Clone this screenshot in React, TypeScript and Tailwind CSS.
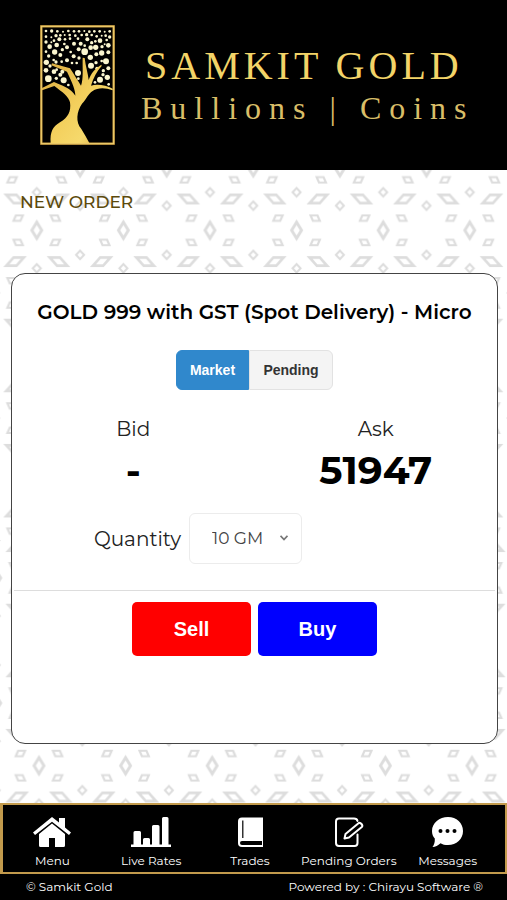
import React, { useState } from "react";

const TILE_W = 86.6;
const TILE_H = 125.2;

const FOLIAGE: [number, number, number][] = [
  [50, 48, 4], [67, 48, 5], [84, 49, 4], [101, 50, 3], [117, 48, 4], [134, 49, 4], [149, 49, 4], [165, 48, 3], [180, 50, 4], [195, 49, 4], [211, 49, 4], [226, 50, 3], [241, 49, 4],
  [50, 65, 4], [66, 67, 3], [80, 62, 5], [93, 61, 4], [106, 60, 3], [121, 60, 4], [138, 62, 4], [157, 60, 4], [172, 59, 5], [187, 60, 4], [202, 64, 4], [217, 62, 3], [229, 62, 4], [241, 66, 5],
  [50, 81, 5], [66, 82, 3], [74, 77, 4], [90, 73, 6], [107, 73, 4], [122, 71, 4], [134, 86, 6], [146, 71, 4], [154, 86, 6], [174, 73, 6], [166, 92, 4], [187, 83, 5], [198, 79, 4], [212, 77, 7], [226, 88, 3], [237, 91, 7], [232, 75, 4],
  [61, 95, 7], [82, 90, 7], [105, 87, 4], [113, 97, 6], [99, 104, 5], [76, 111, 8], [50, 110, 4], [58, 123, 5], [93, 120, 6], [124, 111, 4], [133, 124, 6], [148, 103, 6], [166, 110, 10], [184, 98, 7], [199, 97, 8], [218, 95, 5], [217, 114, 8], [201, 118, 6], [183, 127, 8], [237, 112, 6],
  [51, 142, 8], [73, 135, 4], [80, 141, 5], [97, 140, 4], [113, 136, 6], [128, 144, 4], [149, 129, 5], [142, 144, 4], [50, 166, 7], [62, 153, 5], [82, 164, 4], [99, 170, 6], [74, 170, 7], [57, 191, 10], [81, 190, 5], [93, 179, 6], [103, 196, 9], [117, 210, 4], [146, 174, 9], [147, 191, 4],
  [185, 152, 9], [200, 143, 5], [217, 138, 4], [230, 139, 9], [203, 160, 5], [237, 160, 6], [222, 167, 5], [234, 187, 8], [212, 194, 9], [221, 179, 5], [197, 202, 4], [238, 208, 4],
];

function TreeLogo() {
  return (
    <svg viewBox="32 30 225 360" className="h-[120px] w-[75px] shrink-0" role="img" aria-label="Samkit Gold tree">
      <defs>
        <linearGradient id="gold" x1="0" y1="0" x2="1" y2="1">
          <stop offset="0" stopColor="#d9a83c" />
          <stop offset="0.5" stopColor="#f3cf5c" />
          <stop offset="0.75" stopColor="#f6d96c" />
          <stop offset="1" stopColor="#d6a238" />
        </linearGradient>
      </defs>
      <rect x="36" y="34" width="217" height="352" fill="none" stroke="#c89c40" strokeWidth="7" />
      <rect x="36" y="34" width="217" height="352" fill="none" stroke="#f0d070" strokeWidth="3" />
      {FOLIAGE.map(([x, y, r], i) => (
        <circle key={i} cx={x} cy={y} r={r} fill="#fbf6cf" />
      ))}
      <path
        fill="url(#gold)"
        d="M64 384 C62 350 70 336 92 322 C116 308 126 290 122 262 C118 244 100 232 75 213 L38 226 L38 219 L74 201 L86 206 C105 214 127 222 138 242 C138 225 130 205 113 170 L66 151 L68 145 L122 160 C135 180 146 198 155 212 C163 190 159 160 160 128 L166 129 C169 155 176 175 178 195 C184 175 198 160 216 149 L217 153 C203 168 192 188 185 212 C202 206 230 210 250 221 L250 226 C228 217 205 217 190 228 C175 238 172 252 158 266 C142 290 138 320 156 342 L168 362 L180 384 Z"
      />
    </svg>
  );
}

/* Outline of a polygon around (x, y), followed by its scaled-down hole. */
function ring(x: number, y: number, corners: number[][], hole: number) {
  const loop = (k: number) => "M" + corners.map(([a, b]) => `${x + a * k} ${y + b * k}`).join("L") + "Z";
  return loop(1) + loop(hole);
}

function Gem({ x, y, w, h }: { x: number; y: number; w: number; h: number }) {
  return <path d={ring(x, y, [[0, -h], [w, 0], [0, h], [-w, 0]], 0.48)} />;
}

/* A leaning rhombus; lean 1 falls to the right, lean -1 rises to the right. */
function Leaf({ x, y, w, h, inset, lean }: { x: number; y: number; w: number; h: number; inset: number; lean: number }) {
  return (
    <path d={ring(x, y, [[-w * lean, -h], [inset * lean, -h], [w * lean, h], [-inset * lean, h]], 0.48)} />
  );
}

const SIGNS = [-1, 1];

function Motif({ x, y }: { x: number; y: number }) {
  return (
    <g>
      <Gem x={x} y={y} w={6.7} h={11} />
      <Gem x={x} y={y - 38} w={5.4} h={5.8} />
      <Gem x={x} y={y + 38} w={5.4} h={5.8} />
      {SIGNS.map((a) =>
        SIGNS.map((b) => (
          <Leaf key={`${a}${b}`} x={x + 18.6 * a} y={y + 12.2 * b} w={6.3} h={3.8} inset={3} lean={-a * b} />
        ))
      )}
    </g>
  );
}

function PatternTile({ id, x, y }: { id: string; x: number; y: number }) {
  const cx = TILE_W / 2;
  const cy = TILE_H / 2;
  return (
    <pattern id={id} x={x - cx} y={y - cy} width={TILE_W} height={TILE_H} patternUnits="userSpaceOnUse">
      <g fill="#dddddd" fillRule="evenodd">
        <Motif x={cx} y={cy} />
        <Motif x={0} y={0} />
        <Motif x={TILE_W} y={0} />
        <Motif x={0} y={TILE_H} />
        <Motif x={TILE_W} y={TILE_H} />
        {SIGNS.map((a) =>
          SIGNS.map((b) => (
            <Leaf key={`${a}${b}`} x={cx + 21.7 * a} y={cy + 31.3 * b} w={11.8} h={5.5} inset={2} lean={a * b} />
          ))
        )}
      </g>
    </pattern>
  );
}

function Backdrop() {
  return (
    <svg className="absolute inset-0 h-full w-full" aria-hidden="true">
      <defs>
        <PatternTile id="upper" x={36.8} y={60.3} />
        <PatternTile id="lower" x={39} y={595.7} />
      </defs>
      <rect width="100%" height="370" fill="url(#upper)" />
      <rect y="370" width="100%" height="100%" fill="url(#lower)" />
    </svg>
  );
}

const HomeIcon = () => (
  <svg viewBox="0 0 38 30" className="h-[30px] w-[38px]" fill="#fff" aria-hidden="true">
    <path d="M19 0L26 5.500V1H32V10.500L38 15.500L36 18L19 4.800L2 18L0 15.500Z" />
    <path d="M19 6.500L32 17V28.500Q32 30 30.500 30H22V21H16V30H7.500Q6 30 6 28.500V17Z" />
  </svg>
);

const BarsIcon = () => (
  <svg viewBox="0 0 40 30" className="h-[30px] w-10" fill="#fff" aria-hidden="true">
    <path d="M0 27.500H2.500V15.500Q2.500 14 4 14H8.500Q10 14 10 15.500V27.500H12V22.500Q12 21 13.500 21H17.500Q19 21 19 22.500V27.500H21V9.500Q21 8 22.500 8H27Q28.500 8 28.500 9.500V27.500H31V1.500Q31 0 32.500 0H36Q37.500 0 37.500 1.500V27.500H40V30H0Z" />
  </svg>
);

const BookIcon = () => (
  <svg viewBox="0 0 26 30" className="h-[30px] w-[26px]" aria-hidden="true">
    <path fill="#fff" d="M5 0.500H26V30H5Q1 30 1 26V4.500Q1 0.500 5 0.500Z" />
    <path stroke="#000" strokeWidth="1.200" d="M5.800 3.500V21" />
    <path fill="#000" d="M5 24H25V28H5Q3 28 3 26Q3 24 5 24Z" />
  </svg>
);

const EditIcon = () => (
  <svg viewBox="0 0 30 30" className="h-[30px] w-[30px]" fill="none" stroke="#fff" strokeWidth="2" strokeLinejoin="round" strokeLinecap="round" aria-hidden="true">
    <path d="M23.500 4Q23 1.500 20 1.500H5Q2 1.500 2 4.500V26Q2 29 5 29H20.500Q23.500 29 23.500 26V17.500" />
    <path d="M10.500 21.500L11.500 17L24.500 6.200Q26 5.200 27.500 7Q29 8.800 27.800 10L15 20.500Z" />
  </svg>
);

const ChatIcon = () => (
  <svg viewBox="0 0 31 30" className="h-[30px] w-[31px]" aria-hidden="true">
    <path fill="#fff" d="M16 0C24.500 0 31 6 31 14S24.500 28 16 28C13 28 10.500 27.500 8.500 26.200C6 28.500 3.500 30 0.500 30C2.200 27.500 3 25.500 2.800 21.500C1 19.500 0 17 0 14C0 6 7.500 0 16 0Z" />
    <circle cx="8.500" cy="14" r="2" />
    <circle cx="15.500" cy="14" r="2" />
    <circle cx="22.500" cy="14" r="2" />
  </svg>
);

const TABS = [
  { label: "Menu", Icon: HomeIcon },
  { label: "Live Rates", Icon: BarsIcon },
  { label: "Trades", Icon: BookIcon },
  { label: "Pending Orders", Icon: EditIcon },
  { label: "Messages", Icon: ChatIcon },
];

function Price({ label, value }: { label: string; value: string }) {
  return (
    <div className="flex flex-col items-center">
      <dt className="text-xl leading-7 text-[#222]">{label}</dt>
      <dd className="text-[39px] font-bold leading-[54px] text-black">{value}</dd>
    </div>
  );
}

export default function App() {
  const [mode, setMode] = useState("Market");
  const tab = (name: string) =>
    mode === name
      ? "bg-[#3088cc] border-[#3088cc] text-white"
      : "bg-[#f4f4f4] border-[#e2e2e2] text-[#333]";

  return (
    <div className="flex min-h-screen flex-col bg-white font-['Montserrat','Inter',sans-serif]">
      <header className="flex h-[170px] items-center bg-black pl-10">
        <TreeLogo />
        <div className="ml-[26px] whitespace-nowrap pt-1 font-['Liberation_Serif',serif]">
          <h1 className="pl-1 text-[40px] leading-[42px] tracking-[4px] text-[#f3d468]">SAMKIT GOLD</h1>
          <p className="text-[32px] leading-[42px] tracking-[8px] text-[#d9be68]">Bullions | Coins</p>
        </div>
      </header>

      <main className="relative flex-1 pb-[59px]">
        <Backdrop />
        <div className="relative">
          <h2 className="px-5 pt-5 text-[17px] font-medium leading-6 text-[#5c4a0c]">NEW ORDER</h2>
          <section className="ml-[11px] mr-[9px] mt-[59px] h-[471px] rounded-[14px] border border-[#444] bg-white pt-6">
            <h3 className="text-center text-xl font-semibold leading-7 text-black">
              GOLD 999 with GST (Spot Delivery) - Micro
            </h3>
            <div className="mt-6 flex justify-center font-['Liberation_Sans',sans-serif] text-sm font-bold">
              <button type="button" onClick={() => setMode("Market")} className={`h-10 w-[73px] rounded-l-md border ${tab("Market")}`}>
                Market
              </button>
              <button type="button" onClick={() => setMode("Pending")} className={`h-10 w-[84px] rounded-r-md border ${tab("Pending")}`}>
                Pending
              </button>
            </div>
            <dl className="mt-[25px] grid grid-cols-2">
              <Price label="Bid" value="-" />
              <Price label="Ask" value="51947" />
            </dl>
            <div className="mt-4 flex items-center gap-2">
              <label htmlFor="quantity" className="w-[169px] text-right text-xl text-[#222]">
                Quantity
              </label>
              <div className="relative">
                <select id="quantity" className="h-[51px] w-[113px] appearance-none rounded-md border border-[#ececec] bg-white pl-[22px] text-[17px] text-[#444]">
                  <option>10 GM</option>
                </select>
                <svg viewBox="0 0 8 6" className="pointer-events-none absolute right-[14px] top-[22px] h-[6px] w-2" fill="none" stroke="#777" strokeWidth="1.800" aria-hidden="true">
                  <path d="M0.500 0.800L4 4.500L7.500 0.800" />
                </svg>
              </div>
            </div>
            <hr className="mx-[2px] mt-[26px] border-[#ddd]" />
            <div className="mt-[11px] flex justify-center gap-[7px] font-['Liberation_Sans',sans-serif] text-xl font-bold text-white [text-shadow:0_1px_0_#fff]">
              <button type="button" className="h-[54px] w-[119px] rounded-[5px] bg-[#ff0000]">Sell</button>
              <button type="button" className="h-[54px] w-[119px] rounded-[5px] bg-[#0000ff]">Buy</button>
            </div>
          </section>
        </div>
      </main>

      <nav className="grid h-[71px] grid-cols-5 border-2 border-l-[3px] border-[#c29a4c] bg-black pr-2">
        {TABS.map(({ label, Icon }) => (
          <a key={label} href="#" className="flex flex-col items-center gap-[6px] whitespace-nowrap pt-3 text-xs leading-4 text-white">
            <Icon />
            {label}
          </a>
        ))}
      </nav>
      <footer className="flex h-[26px] items-center justify-between bg-black pl-[26px] pr-6 text-xs leading-4 text-white">
        <span>© Samkit Gold</span>
        <span>Powered by : Chirayu Software ®</span>
      </footer>
    </div>
  );
}
